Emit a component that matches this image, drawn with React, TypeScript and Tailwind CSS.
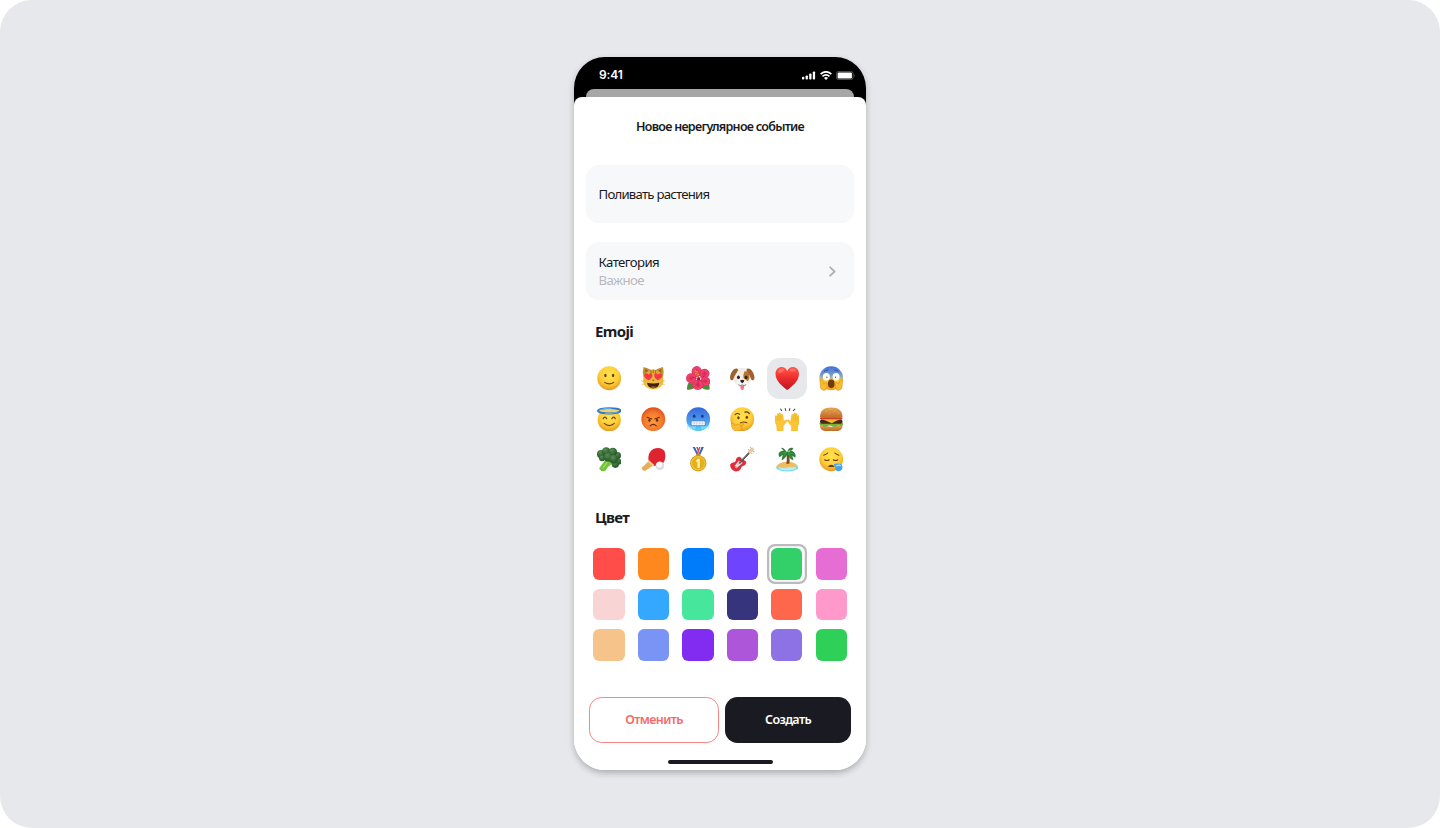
import React from 'react';

const Defs = () => (
  <svg width="0" height="0" className="absolute" aria-hidden="true">
    <defs>
      <radialGradient id="yellow" cx="0.5" cy="0.36" r="0.66">
        <stop offset="0" stopColor="#ffe34f" />
        <stop offset="0.6" stopColor="#fdce38" />
        <stop offset="1" stopColor="#e8941c" />
      </radialGradient>
      <radialGradient id="angry" cx="0.5" cy="0.6" r="0.62">
        <stop offset="0" stopColor="#ff9a3c" />
        <stop offset="0.6" stopColor="#f37a2c" />
        <stop offset="1" stopColor="#dd4b1c" />
      </radialGradient>
      <linearGradient id="cold" x1="0" y1="0" x2="0" y2="1">
        <stop offset="0" stopColor="#3568dc" />
        <stop offset="0.5" stopColor="#4b93ec" />
        <stop offset="1" stopColor="#5fd0f5" />
      </linearGradient>
      <linearGradient id="scream" x1="0" y1="0" x2="0" y2="1">
        <stop offset="0" stopColor="#3f6fd8" />
        <stop offset="0.38" stopColor="#7aa0cf" />
        <stop offset="0.6" stopColor="#f8cf3c" />
        <stop offset="1" stopColor="#f3a11d" />
      </linearGradient>
      <linearGradient id="heart" x1="0" y1="0" x2="0" y2="1">
        <stop offset="0" stopColor="#ff5a4d" />
        <stop offset="0.5" stopColor="#ec2b2b" />
        <stop offset="1" stopColor="#c01420" />
      </linearGradient>
      <linearGradient id="bun" x1="0" y1="0" x2="0" y2="1">
        <stop offset="0" stopColor="#e9a352" />
        <stop offset="1" stopColor="#bd6a26" />
      </linearGradient>
      <linearGradient id="fur" x1="0" y1="0" x2="0" y2="1">
        <stop offset="0" stopColor="#dba536" />
        <stop offset="1" stopColor="#f6cb48" />
      </linearGradient>
      <radialGradient id="petal">
        <stop offset="0" stopColor="#d92450" />
        <stop offset="0.7" stopColor="#ef4470" />
        <stop offset="1" stopColor="#dc2c5a" />
      </radialGradient>
      <radialGradient id="leafy" cx="0.4" cy="0.3">
        <stop offset="0" stopColor="#5b8f50" />
        <stop offset="1" stopColor="#2c5f31" />
      </radialGradient>
      <radialGradient id="gold">
        <stop offset="0" stopColor="#e9b420" />
        <stop offset="0.7" stopColor="#e5ac18" />
        <stop offset="1" stopColor="#f4cf45" />
      </radialGradient>
    </defs>
  </svg>
);

const Face = ({ fill = 'url(#yellow)', cy = 24, r = 23.3 }: { fill?: string; cy?: number; r?: number }) => (
  <circle cx="24" cy={cy} r={r} fill={fill} />
);

const brown = '#6b3a10';
const line = { fill: 'none', strokeLinecap: 'round' as const, strokeLinejoin: 'round' as const };

const emojis: { name: string; art: React.ReactNode }[] = [
  {
    name: 'smile',
    art: (
      <>
        <Face />
        <ellipse cx="16.5" cy="18.5" rx="2.3" ry="3.5" fill={brown} />
        <ellipse cx="31.5" cy="18.5" rx="2.3" ry="3.5" fill={brown} />
        <path d="M15 32Q24 38 33 32" {...line} stroke={brown} strokeWidth="2" />
      </>
    ),
  },
  {
    name: 'cat',
    art: (
      <>
        <path d="M5 2Q2 12 5 22L22 9Q12 3 5 2ZM43 2Q46 12 43 22L26 9Q36 3 43 2Z" fill="#c68f2c" />
        <path d="M8 6L9 15L15 10ZM40 6L39 15L33 10Z" fill="#8f5a3a" />
        <path d="M24 7C37 7 43 17 44 28C44 40 34 46 24 46C14 46 4 40 4 28C5 17 11 7 24 7Z" fill="url(#fur)" />
        <path d="M19 9L20 13M24 8V13M29 9L28 13" {...line} stroke="#9c6d22" strokeWidth="1.8" />
        <path d="M1 29L9 31M2 36L10 35M47 29L39 31M46 36L38 35" {...line} stroke="#dfae48" strokeWidth="1.2" />
        <path d="M12 33Q24 36 36 33Q35 43 24 44Q13 43 12 33Z" fill="#3d2112" />
        <path d="M18 41Q24 38 30 41Q24 45 18 41Z" fill="#b95a2c" />
        <path d="M15 28C9 25 4 20 7 16C9 13 13 14 15 17C17 13 21 14 22 17C23 22 19 25 15 28Z" fill="#f53a45" />
        <path d="M33 28C39 25 44 20 41 16C39 13 35 14 33 17C31 13 27 14 26 17C25 22 29 25 33 28Z" fill="#f53a45" />
        <path d="M21.5 27H26.5L24 30Z" fill="#a94f36" />
      </>
    ),
  },
  {
    name: 'hibiscus',
    art: (
      <>
        <path d="M2 46Q1 31 13 29L20 38Q13 48 2 46ZM46 46Q48 34 38 31L27 38Q34 48 46 46Z" fill="#4c8c3c" />
        <ellipse cx="21" cy="11" rx="10" ry="11" fill="url(#petal)" />
        <ellipse cx="36" cy="15" rx="10" ry="9.5" fill="url(#petal)" transform="rotate(-25 36 15)" />
        <ellipse cx="38" cy="30" rx="10" ry="9" fill="url(#petal)" transform="rotate(35 38 30)" />
        <ellipse cx="23" cy="37" rx="11" ry="10" fill="url(#petal)" />
        <ellipse cx="10" cy="24" rx="10" ry="10" fill="url(#petal)" />
        <path d="M23 25L13 22M23 25L35 20M23 25L34 31M23 25L24 38" {...line} stroke="#b91c43" strokeWidth="1.2" />
        <path d="M24 24L20 11" {...line} stroke="#d9702f" strokeWidth="2.6" />
        <g fill="#eda63e"><circle cx="18" cy="10" r="1.5" /><circle cx="22" cy="11" r="1.5" /><circle cx="19" cy="15" r="1.4" /><circle cx="24" cy="16" r="1.4" /></g>
        <circle cx="25" cy="25" r="3" fill="#8f1a35" />
      </>
    ),
  },
  {
    name: 'dog',
    art: (
      <>
        <path d="M12 6Q24 2 36 6Q43 16 40 30Q34 42 24 42Q14 42 8 30Q5 16 12 6Z" fill="#f0ece7" />
        <path d="M14 5C6 4 1 14 0 22C0 29 5 30 7 25C9 18 13 14 16 8ZM34 5C42 4 47 14 48 22C48 29 43 30 41 25C39 18 35 14 32 8Z" fill="#9c612e" />
        <path d="M28 11Q36 8 38 18Q39 29 33 30Q26 27 26 19Z" fill="#b9742f" />
        <ellipse cx="16.5" cy="22" rx="2.8" ry="3.6" fill="#29201f" />
        <ellipse cx="31.5" cy="22" rx="2.8" ry="3.6" fill="#29201f" />
        <ellipse cx="24" cy="34" rx="11.5" ry="8.5" fill="#f8f6f3" />
        <path d="M20.5 38H27.5V43Q27.5 47 24 47Q20.5 47 20.5 43Z" fill="#f07790" />
        <path d="M17 37Q21 40 24 37Q27 40 31 37" {...line} stroke="#5c4a44" strokeWidth="1.3" />
        <path d="M20 28Q24 26 28 28Q28 32 24 34Q20 32 20 28Z" fill="#2a2224" />
      </>
    ),
  },
  {
    name: 'heart',
    art: (
      <>
        <path d="M24 47C15 40 1 30 1 15C1 7 7 2 13 2C18 2 22 5 24 10C26 5 30 2 35 2C41 2 47 7 47 15C47 30 33 40 24 47Z" fill="url(#heart)" />
        <ellipse cx="12" cy="9" rx="6" ry="3.5" fill="#ff8b7d" opacity="0.6" transform="rotate(-25 12 9)" />
        <ellipse cx="35" cy="8" rx="6" ry="3" fill="#ff8b7d" opacity="0.5" />
      </>
    ),
  },
  {
    name: 'scream',
    art: (
      <>
        <Face fill="url(#scream)" />
        <path d="M10 11Q13 7 17 8M38 11Q35 7 31 8" {...line} stroke="#284a8d" strokeWidth="1.8" />
        <ellipse cx="14.5" cy="21" rx="6.8" ry="7.3" fill="#fff" />
        <ellipse cx="33.5" cy="21" rx="6.8" ry="7.3" fill="#fff" />
        <circle cx="15.5" cy="22" r="1.3" fill="#6a5545" />
        <circle cx="32.5" cy="22" r="1.3" fill="#6a5545" />
        <ellipse cx="24" cy="35" rx="6.5" ry="8.5" fill="#74390f" />
        <path d="M2 27Q5 25 7 29L10 36Q14 29 16 34Q17 42 13 47Q6 49 3 43ZM46 27Q43 25 41 29L38 36Q34 29 32 34Q31 42 35 47Q42 49 45 43Z" fill="#f9bd2f" stroke="#d88316" strokeWidth="1" />
      </>
    ),
  },
  {
    name: 'angel',
    art: (
      <>
        <Face cy={25} r={22.7} />
        <ellipse cx="24" cy="7.5" rx="22" ry="5.3" fill="#f1d264" stroke="#2f76d2" strokeWidth="3.8" />
        <path d="M5 6Q14 1 28 2.5M16 13Q30 14 40 10" {...line} stroke="#6eb9f5" strokeWidth="1.6" />
        <path d="M12 23Q15.5 17 19 23M29 23Q32.500 17 36 23M14 32Q24 41 34 32" {...line} stroke={brown} strokeWidth="2.3" />
      </>
    ),
  },
  {
    name: 'angry',
    art: (
      <>
        <Face fill="url(#angry)" />
        <path d="M12 20L21 23.500M36 20L27 23.500M18 37Q24 31 30 37" {...line} stroke="#6a2a0c" strokeWidth="2.2" />
        <ellipse cx="16.500" cy="26" rx="2.3" ry="3" fill="#6a2a0c" />
        <ellipse cx="31.500" cy="26" rx="2.3" ry="3" fill="#6a2a0c" />
      </>
    ),
  },
  {
    name: 'cold',
    art: (
      <>
        <Face fill="url(#cold)" />
        <ellipse cx="16" cy="18" rx="2.6" ry="3.2" fill="#153b82" />
        <ellipse cx="32" cy="18" rx="2.6" ry="3.2" fill="#153b82" />
        <rect x="10" y="27" width="28" height="9.500" rx="3" fill="#f4f8fc" stroke="#2b5eae" strokeWidth="1.2" />
        <path d="M16 27V36M21 27V36M27 27V36M32 27V36M10 31.500H38" stroke="#a3b6ce" strokeWidth="0.8" />
        <path d="M2 33L3 47L5 39L9 45L12 41L17 44L20 38H29L31 44L36 41L39 45L43 39L45 47L46 33L42 38H6Z" fill="#9be5fb" opacity="0.7" />
      </>
    ),
  },
  {
    name: 'thinking',
    art: (
      <>
        <Face />
        <path d="M10 15Q14 11 19 14M29 10Q35 8 38 13M21 31Q27 28 33 31" {...line} stroke={brown} strokeWidth="2.2" />
        <ellipse cx="16.5" cy="21" rx="2.4" ry="3.1" fill={brown} />
        <ellipse cx="33" cy="20" rx="2.4" ry="3.1" fill={brown} />
        <path d="M3 33Q6 29 9 36L25 31Q29 31 27 35L19 37Q25 37 23 41Q22 47 13 47Q3 47 3 33Z" fill="#fbbd30" stroke="#d98a1d" strokeWidth="1.2" />
      </>
    ),
  },
  {
    name: 'hands',
    art: (
      <>
        <path d="M11 4L13 7M20 3L21 7M29 3L28 7M39 4L36 7" {...line} stroke="#55504d" strokeWidth="2.2" />
        <path d="M4 47L3 36Q-1 29 0 18Q2 15 4 19V14Q6 11 8 14V12Q11 10 12 15Q15 12 16 18L17 28L22 25Q25 25 23 29L16 37V47ZM44 47L45 36Q49 29 48 18Q46 15 44 19V14Q42 11 40 14V12Q37 10 36 15Q33 12 32 18L31 28L26 25Q23 25 25 29L32 37V47Z" fill="#fbc535" stroke="#e8a51d" strokeWidth="0.6" />
        <path d="M4 20L5 27M8 16V26M12 17V26M44 20L43 27M40 16V26M36 17V26" {...line} stroke="#e3a02a" strokeWidth="0.9" />
      </>
    ),
  },
  {
    name: 'burger',
    art: (
      <>
        <path d="M2 35Q24 42 46 35Q47 46 37 47H11Q1 46 2 35Z" fill="url(#bun)" />
        <path d="M1 31Q24 27 47 31Q49 36 43 37Q38 35 34 38Q29 40 25 37Q20 35 15 38Q10 40 7 36Q0 36 1 31Z" fill="#6fb537" />
        <rect x="2" y="24" width="44" height="9" rx="4" fill="#4b2717" />
        <path d="M3 23H45L34 27L25 32L14 27Z" fill="#fcb92d" />
        <rect x="2" y="20" width="44" height="4" rx="2" fill="#d43b26" />
        <path d="M2 20Q2 1 24 1Q46 1 46 20Q24 23 2 20Z" fill="url(#bun)" />
        <path d="M14 8H15M22 5H23M30 8H31M38 12H39M20 12H21" {...line} stroke="#f3c583" strokeWidth="1.2" />
      </>
    ),
  },
  {
    name: 'broccoli',
    art: (
      <>
        <path d="M4 42L18 23L38 30L27 35Q20 39 16 47Q8 49 4 42Z" fill="#74c43b" />
        <path d="M11 42L22 27" stroke="#a6df68" strokeWidth="2" />
        <g fill="url(#leafy)">
          <circle cx="8" cy="14" r="8" /><circle cx="40" cy="17" r="7" /><circle cx="18" cy="9" r="8.5" /><circle cx="31" cy="10" r="8.5" />
          <circle cx="10" cy="22" r="6" /><circle cx="42" cy="29" r="6" /><circle cx="36" cy="34" r="7" /><circle cx="22" cy="20" r="9" /><circle cx="33" cy="24" r="9" />
        </g>
      </>
    ),
  },
  {
    name: 'pingpong',
    art: (
      <>
        <path d="M16 27L24 36L8 47Q2 46 1 41Z" fill="#e9ac58" />
        <path d="M15 27Q12 12 24 4Q38 -2 46 8Q51 25 40 36L24 37Z" fill="#df2430" />
        <path d="M14 27L25 37" stroke="#f5cd88" strokeWidth="4" />
        <circle cx="37" cy="37" r="8.5" fill="#dcdde2" />
        <circle cx="36" cy="35" r="5.500" fill="#f7f7f9" />
      </>
    ),
  },
  {
    name: 'medal',
    art: (
      <>
        <path d="M13 0H18L25 15H21Z" fill="#3467bd" /><path d="M18 0H21L27 14L25 16Z" fill="#fff" /><path d="M20 0H23L28 12L26 16Z" fill="#d83945" />
        <path d="M35 0H30L24 15H28Z" fill="#3467bd" /><path d="M30 0H27L22 14L24 16Z" fill="#e7dfe6" /><path d="M28 0H26L21 13L23 16Z" fill="#d83945" />
        <rect x="20" y="13" width="8" height="6" rx="2" fill="#c88a16" />
        <circle cx="24" cy="32" r="16" fill="#cf9416" /><circle cx="24" cy="32" r="14.2" fill="url(#gold)" />
        <path d="M19.500 27L23 23H27V41H22.500V28L19.500 30Z" fill="#fff2ae" />
      </>
    ),
  },
  {
    name: 'guitar',
    art: (
      <>
        <path d="M12 23Q18 16 22 22L32 29Q32 36 25 37Q22 38 21 43Q18 48 11 48Q1 46 0 35Q3 29 9 30Q12 28 12 23Z" fill="#e22c3c" />
        <path d="M17 27L25 31L19 36L12 42L9 37Z" fill="#f0dfe0" />
        <path d="M18 32L38 11" stroke="#4d4546" strokeWidth="3.6" />
        <path d="M14 36L38 10" stroke="#a99e99" strokeWidth="1" />
        <path d="M35 9L42 1Q47 0 47 5L39 14Z" fill="#eecaa0" />
        <path d="M37 6L36 5M41 2L40 1M42 12L43 13M45 8L47 9M10 37L15 42" {...line} stroke="#8b7e7a" strokeWidth="1.5" />
      </>
    ),
  },
  {
    name: 'island',
    art: (
      <>
        <ellipse cx="24" cy="40" rx="22" ry="8" fill="#7cdbe8" />
        <ellipse cx="24" cy="41" rx="17" ry="5" fill="#b4edf1" />
        <path d="M3 37Q12 28 24 29Q36 28 44 36Q37 41 28 39Q16 44 3 37Z" fill="#efbd61" />
        <path d="M22 33Q25 23 21 11L26 9Q30 24 28 33Z" fill="#7a4b25" />
        <path d="M24 10Q17 4 9 10Q5 15 9 20L15 15L13 26Q21 22 24 13Q28 23 36 26L34 17L40 21Q42 12 34 8Q27 5 24 10ZM23 10Q16 0 12 2Q16 8 23 10ZM24 10Q26 0 36 2Q34 8 24 10Z" fill="#2a8039" />
        <path d="M12 13L22 10L17 18M26 11L36 14M26 12L31 20" {...line} stroke="#4da94b" strokeWidth="1.2" />
      </>
    ),
  },
  {
    name: 'sleepy',
    art: (
      <>
        <Face />
        <path d="M9 16Q13 15 17 12M39 16Q35 15 31 12M11 25Q15 28 20 25M28 25Q33 28 37 25" {...line} stroke={brown} strokeWidth="2" />
        <path d="M17 38Q24 32 31 38Q24 40 17 38Z" fill={brown} />
        <path d="M29 34Q36 31 43 34Q48 38 45 44Q41 49 35 47Q31 44 32 39Z" fill="#43a4ec" />
        <path d="M34 37Q39 34 42 37" {...line} stroke="#b6e3ff" strokeWidth="2" />
      </>
    ),
  },
];

const colors = [
  'bg-[#ff4d49]', 'bg-[#ff881e]', 'bg-[#007bfa]', 'bg-[#6e44fe]', 'bg-[#33cf69]', 'bg-[#e66dd4]',
  'bg-[#f9d4d4]', 'bg-[#34a7fe]', 'bg-[#46e69d]', 'bg-[#35347c]', 'bg-[#ff674d]', 'bg-[#ff99cc]',
  'bg-[#f6c48b]', 'bg-[#7994f5]', 'bg-[#832cf1]', 'bg-[#ad56da]', 'bg-[#8d72e6]', 'bg-[#2fd058]',
];

const SignalIcons = () => (
  <div className="flex h-[9px] items-center">
    <svg width="14" height="9" viewBox="0 0 14 9" fill="#fff">
      <rect x="0" y="5.800" width="2.300" height="2.700" rx="0.8" />
      <rect x="3.600" y="4.4" width="2.300" height="4.100" rx="0.8" />
      <rect x="7.200" y="2.4" width="2.300" height="6.100" rx="0.8" />
      <rect x="10.800" y="0.500" width="2.300" height="8" rx="0.8" />
    </svg>
    <svg className="ml-[3.5px]" width="12" height="9" viewBox="0 0 12 9" fill="none" stroke="#fff" strokeWidth="1.7">
      <path d="M0.6 3.1Q6 -1.5 11.4 3.1M2.5 5.4Q6 2.2 9.5 5.4" />
      <path d="M4 6.9Q6 5.2 8 6.9L6 8.900Z" fill="#fff" stroke="none" />
    </svg>
    <svg className="ml-[4px]" width="20" height="9" viewBox="0 0 20 9">
      <rect x="0.4" y="0.4" width="16.7" height="8.2" rx="2.4" fill="none" stroke="#666" strokeWidth="0.8" />
      <rect x="1.6" y="1.5" width="14.3" height="6" rx="1.2" fill="#fff" />
      <path d="M18 3Q19.2 4.5 18 6Z" fill="#777" />
    </svg>
  </div>
);

export default function App() {
  return (
    <div className="h-[828px] w-[1440px] overflow-hidden bg-white font-['Noto_Sans',sans-serif] text-[#1a1b22]">
      <Defs />
      <div className="flex h-full w-full justify-center rounded-[32px] bg-[#e6e8eb] pt-[57px]">
        <main className="flex h-[713px] w-[292px] flex-col overflow-hidden rounded-[31px] bg-linear-to-b from-black from-50% to-white to-50% shadow-[0_3px_6px_rgba(0,0,0,0.25)]">
          <div className="flex h-8 shrink-0 items-center justify-between pt-[4px] pr-[10.5px] pl-[25px]">
            <span className="font-['Inter',sans-serif] text-[12px] leading-4 font-semibold tracking-[-0.1px] text-white">9:41</span>
            <SignalIcons />
          </div>
          <div className="mx-3 h-2 shrink-0 rounded-t-[8px] bg-[#a6a6a6]" />
          <section className="flex flex-1 flex-col rounded-t-[8px] bg-white">
            <h1 className="flex h-[67.7px] shrink-0 justify-center pt-[21px] text-[12.5px] leading-[18px] font-semibold tracking-[-0.72px] whitespace-nowrap">
              Новое нерегулярное событие
            </h1>
            <div className="mx-3 flex h-[58.4px] shrink-0 items-center rounded-[12.5px] bg-[#f7f8fa] px-[12.5px] pt-[2px] text-[13.2px] tracking-[-0.77px]">
              Поливать растения
            </div>
            <div className="mx-3 mt-[18.7px] flex h-[58.4px] shrink-0 items-center justify-between rounded-[12.5px] bg-[#f7f8fa] pr-[18px] pl-[12.5px]">
              <div className="text-[13.2px] leading-[18px] tracking-[-0.58px]">
                <p>Категория</p>
                <p className="text-[#b7b8bc]">Важное</p>
              </div>
              <svg className="mt-[2px]" width="7" height="11" viewBox="0 0 7 11" fill="none" stroke="#aeafb4" strokeWidth="1.8" strokeLinecap="round" strokeLinejoin="round">
                <path d="M1.2 1.3L5.6 5.5L1.2 9.7" />
              </svg>
            </div>
            <h2 className="h-[58px] shrink-0 pt-[21px] pl-[21px] text-[15px] leading-[20px] font-bold tracking-[-0.65px]">Emoji</h2>
            <div className="grid shrink-0 grid-cols-6 gap-x-[3.95px] pr-[14.5px] pl-[14.8px]">
              {emojis.map((e) => (
                <div key={e.name} className={`flex h-[40.5px] items-center justify-center rounded-[12.5px] ${e.name === 'heart' ? 'bg-[#e6e8eb]' : ''}`}>
                  <svg width="24.5" height="24.5" viewBox="0 0 48 48">{e.art}</svg>
                </div>
              ))}
            </div>
            <h2 className="h-[64px] shrink-0 pt-[27px] pl-[21px] text-[15px] leading-[20px] font-bold tracking-[-0.65px]">Цвет</h2>
            <div className="grid shrink-0 grid-cols-6 gap-x-[3.95px] pr-[14.5px] pl-[14.8px]">
              {colors.map((c, i) => (
                <div key={c} className={`flex h-[40.5px] items-center justify-center rounded-[8px] ${i === 4 ? 'shadow-[inset_0_0_0_2.3px_#babbbd]' : ''}`}>
                  <div className={`h-[31.2px] w-[31.2px] rounded-[6.2px] ${c}`} />
                </div>
              ))}
            </div>
            <div className="mt-[31.5px] flex shrink-0 gap-[6px] pl-[15px]">
              <button className="h-[46.8px] w-[130px] rounded-[12.5px] border border-[#f98585] text-[12.5px] font-semibold tracking-[-0.62px] text-[#f56b6c]">Отменить</button>
              <button className="h-[46.8px] w-[126px] rounded-[12.5px] bg-[#1a1b22] text-[12.5px] font-semibold tracking-[-0.62px] text-white">Создать</button>
            </div>
            <div className="mt-[16.7px] h-1 w-[105px] shrink-0 self-center rounded-full bg-[#1a1b22]" />
          </section>
        </main>
      </div>
    </div>
  );
}
